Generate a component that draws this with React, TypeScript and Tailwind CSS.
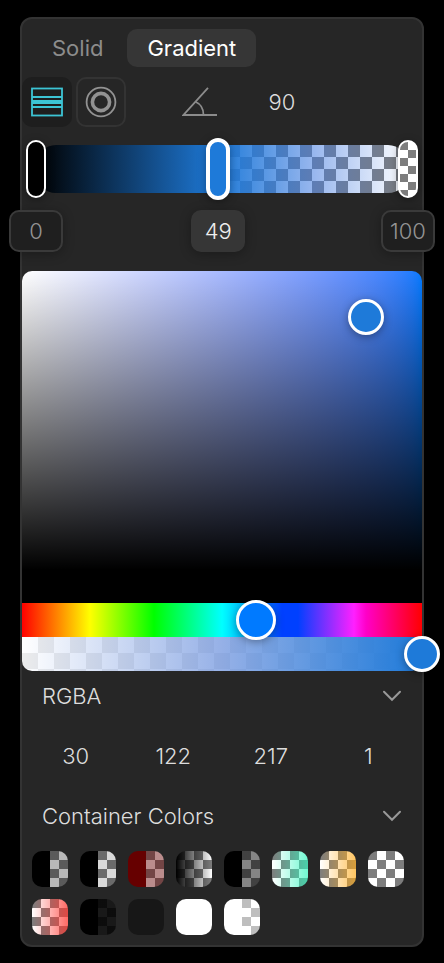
import { useState } from 'react';
import clsx from 'clsx';

const CHECKER = 'repeating-conic-gradient(#fff 0 25%, #7d7d7d 0 50%)';

const SWATCHES = [
  { name: 'Black to 30% black', fill: 'linear-gradient(to right, #000 50%, rgba(0,0,0,0.28) 50%)' },
  { name: 'Black to 15% black', fill: 'linear-gradient(to right, #000 50%, rgba(0,0,0,0.15) 50%)' },
  { name: 'Maroon', fill: 'linear-gradient(to right, #660000 50%, rgba(102,0,0,0.45) 50%)' },
  { name: 'Black fade', fill: 'linear-gradient(to right, #000, rgba(0,0,0,0))' },
  { name: 'Black to 50% black', fill: 'linear-gradient(to right, #000 50%, rgba(0,0,0,0.48) 50%)' },
  { name: 'Mint fade', fill: 'linear-gradient(to right, rgba(52,245,190,0), rgba(52,245,190,0.7))' },
  { name: 'Amber fade', fill: 'linear-gradient(to right, rgba(255,172,30,0), rgba(255,172,30,0.7))' },
  { name: 'Transparent', fill: 'none' },
  { name: 'Red fade', fill: 'linear-gradient(to right, rgba(255,55,48,0), rgba(255,55,48,0.75))' },
  { name: 'Black to 90% black', fill: 'linear-gradient(to right, #000 50%, rgba(0,0,0,0.9) 50%)' },
  { name: 'Near black', fill: 'linear-gradient(#171717, #171717)' },
  { name: 'White', fill: 'linear-gradient(#fff, #fff)' },
  { name: 'White to 50% white', fill: 'linear-gradient(to right, #fff 50%, rgba(255,255,255,0.5) 50%)' },
];

const STOPS = [
  {
    at: 0,
    label: 'border-2 border-[#3a3a3a] bg-[#1f1f1f] text-[#949494]',
    thumb:
      '-inset-x-[10px] w-[calc(100%+20px)] [&::-webkit-slider-thumb]:h-[58px] [&::-webkit-slider-thumb]:w-5 [&::-webkit-slider-thumb]:border-2 [&::-webkit-slider-thumb]:bg-black',
  },
  {
    at: 49,
    label: 'bg-[#363636] text-[#eeeeee]',
    thumb:
      '-inset-x-3 w-[calc(100%+24px)] [&::-webkit-slider-thumb]:h-[62px] [&::-webkit-slider-thumb]:w-6 [&::-webkit-slider-thumb]:border-4 [&::-webkit-slider-thumb]:border-[#f0f0f0] [&::-webkit-slider-thumb]:bg-[#1e7ad9]',
  },
  {
    at: 100,
    label: 'border-2 border-[#3a3a3a] bg-[#1f1f1f] text-[#949494]',
    thumb:
      '-inset-x-[10px] w-[calc(100%+20px)] [&::-webkit-slider-thumb]:h-[58px] [&::-webkit-slider-thumb]:w-5 [&::-webkit-slider-thumb]:border-2 [&::-webkit-slider-thumb]:bg-[repeating-conic-gradient(#fff_0_25%,#7d7d7d_0_50%)] [&::-webkit-slider-thumb]:bg-[length:16px_16px]',
  },
];

const THUMB =
  'appearance-none bg-transparent outline-none [&::-webkit-slider-thumb]:appearance-none [&::-webkit-slider-thumb]:rounded-full [&::-webkit-slider-thumb]:border-white [&::-webkit-slider-thumb]:shadow-[0_2px_8px_rgba(0,0,0,0.35)]';

function LinearIcon() {
  return (
    <svg width="32" height="30" viewBox="0 0 32 30" fill="none" stroke="#3cc4d4" aria-hidden="true">
      <rect x="1" y="1.5" width="30" height="27" strokeWidth="1.8" />
      <path d="M1 10h30M1 20h30" strokeWidth="2" />
      <path d="M1 15h30" strokeWidth="4" />
    </svg>
  );
}

function RadialIcon() {
  return (
    <svg width="32" height="32" viewBox="0 0 32 32" fill="none" stroke="#929292" aria-hidden="true">
      <circle cx="16" cy="16" r="14.4" strokeWidth="1.8" />
      <circle cx="16" cy="16" r="8.6" strokeWidth="3.6" />
    </svg>
  );
}

function AngleIcon() {
  return (
    <svg width="36" height="30" viewBox="0 0 36 30" fill="none" stroke="#8c8c8c" strokeWidth="1.8" aria-hidden="true">
      <path d="M26 .8 1.5 28H35" />
      <path d="M13.5 14.8C18.5 17 21.5 22 21.5 28" />
    </svg>
  );
}

function Chevron() {
  return (
    <svg width="20" height="12" viewBox="0 0 20 12" fill="none" stroke="#999" strokeWidth="2" strokeLinecap="round" aria-hidden="true">
      <path d="m2 1.8 8 8 8-8" />
    </svg>
  );
}

function SectionHeader({ title }: { title: string }) {
  return (
    <button type="button" className="flex h-[50px] w-full items-center justify-between px-5 font-light">
      {title}
      <Chevron />
    </button>
  );
}

export default function App() {
  const [mode, setMode] = useState('Gradient');
  const [shape, setShape] = useState('linear');

  return (
    <div className="min-h-screen overflow-hidden bg-black px-5 pt-[17px] pb-4 font-['Inter',sans-serif] text-[22px] leading-7 text-[#dddddd]">
      <main className="rounded-xl border-2 border-[#333333] bg-[#262626]">
        <div className="flex gap-1 px-[10px] pt-[10px]">
          {['Solid', 'Gradient'].map((m) => (
            <button
              key={m}
              type="button"
              onClick={() => setMode(m)}
              className={clsx(
                'h-[38px] rounded-[10px] px-5',
                mode === m ? 'bg-[#363636] text-white' : 'text-[#8c8c8c]',
              )}
            >
              {m}
            </button>
          ))}
        </div>

        <div className="mt-[10px] flex items-center">
          <button
            type="button"
            aria-label="Linear gradient"
            onClick={() => setShape('linear')}
            className={clsx(
              'flex size-[50px] items-center justify-center rounded-[10px]',
              shape === 'linear' ? 'bg-[#1e1e1e]' : 'border-2 border-[#333333]',
            )}
          >
            <LinearIcon />
          </button>
          <button
            type="button"
            aria-label="Radial gradient"
            onClick={() => setShape('radial')}
            className={clsx(
              'ml-1 flex size-[50px] items-center justify-center rounded-[10px]',
              shape === 'radial' ? 'bg-[#1e1e1e]' : 'border-2 border-[#333333]',
            )}
          >
            <RadialIcon />
          </button>
          <label className="ml-14 flex items-center">
            <AngleIcon />
            <input
              aria-label="Angle"
              defaultValue="90"
              className="ml-6 w-20 bg-transparent text-center font-light outline-none"
            />
          </label>
        </div>

        <div
          className="relative mx-[14px] mt-[18px] h-12 rounded-[20px]"
          style={{
            background: `linear-gradient(to right, #000 0%, #1e7ad9 49%, rgba(70,125,225,0.55) 75%, rgba(255,255,255,0) 100%), ${CHECKER} 0 0 / 24px 24px`,
          }}
        >
          {STOPS.map((s) => (
            <input
              key={s.at}
              type="range"
              aria-label={`Stop at ${s.at}%`}
              defaultValue={s.at}
              className={clsx(
                'pointer-events-none absolute inset-y-0 h-full [&::-webkit-slider-thumb]:pointer-events-auto',
                THUMB,
                s.thumb,
              )}
            />
          ))}
        </div>

        <div className="relative mx-[14px] mt-[17px] h-[42px]">
          {STOPS.map((s) => (
            <input
              key={s.at}
              aria-label={`Position ${s.at}`}
              defaultValue={s.at}
              style={{ left: `${s.at}%` }}
              className={clsx(
                'absolute h-full w-[54px] -translate-x-1/2 rounded-[10px] text-center font-light shadow-[0_2px_12px_rgba(0,0,0,0.3)] outline-none',
                s.label,
              )}
            />
          ))}
        </div>

        <div className="relative mt-[19px] h-[332px] rounded-t-[10px] bg-[linear-gradient(to_bottom,transparent,#000_90%),linear-gradient(to_right_in_lab,#fff,#007aff)]">
          <button
            type="button"
            aria-label="Saturation and brightness"
            className="absolute top-[46px] left-[86%] size-9 -translate-x-1/2 -translate-y-1/2 rounded-full border-3 border-white bg-[#1e7ad9] shadow-[0_2px_8px_rgba(0,0,0,0.35)]"
          />
        </div>
        <div className="relative h-[34px] bg-[linear-gradient(to_right,#f00,#ff0_17%,#0f0_33%,#0ff_50%,#0040ff_65%,#0040ff_69%,#ff20ff_83%,#ff00c8_86%,#f00)]">
          <input
            type="range"
            aria-label="Hue"
            max={360}
            defaultValue={211}
            className={clsx(
              'absolute inset-y-0 -left-5 z-10 h-full w-[calc(100%+40px)] [&::-webkit-slider-thumb]:size-10 [&::-webkit-slider-thumb]:border-3 [&::-webkit-slider-thumb]:bg-[#007aff]',
              THUMB,
            )}
          />
        </div>
        <div className="relative h-[34px] rounded-b-[10px] bg-[linear-gradient(to_right,rgba(130,150,215,0),rgba(90,132,217,0.64)_50%,#1e7ad9),repeating-conic-gradient(#ececec_0_25%,#fff_0_50%)] bg-[length:100%_100%,32px_32px]">
          <input
            type="range"
            aria-label="Opacity"
            defaultValue={100}
            className={clsx(
              'absolute inset-y-0 -left-[18px] z-10 h-full w-[calc(100%+36px)] [&::-webkit-slider-thumb]:size-9 [&::-webkit-slider-thumb]:border-3 [&::-webkit-slider-thumb]:bg-[#1e7ad9]',
              THUMB,
            )}
          />
        </div>

        <SectionHeader title="RGBA" />
        <div className="grid h-[70px] grid-cols-4 items-center px-[5px]">
          {[
            ['Red', '30'],
            ['Green', '122'],
            ['Blue', '217'],
            ['Alpha', '1'],
          ].map(([name, value]) => (
            <input
              key={name}
              aria-label={name}
              defaultValue={value}
              className="w-full bg-transparent text-center font-light outline-none"
            />
          ))}
        </div>

        <SectionHeader title="Container Colors" />
        <div className="flex flex-wrap gap-3 p-[10px]">
          {SWATCHES.map((s) => (
            <button
              key={s.name}
              type="button"
              aria-label={s.name}
              className="size-9 rounded-[10px]"
              style={{ background: `${s.fill === 'none' ? '' : `${s.fill}, `}${CHECKER} 0 0 / 18px 18px` }}
            />
          ))}
        </div>
      </main>
    </div>
  );
}
